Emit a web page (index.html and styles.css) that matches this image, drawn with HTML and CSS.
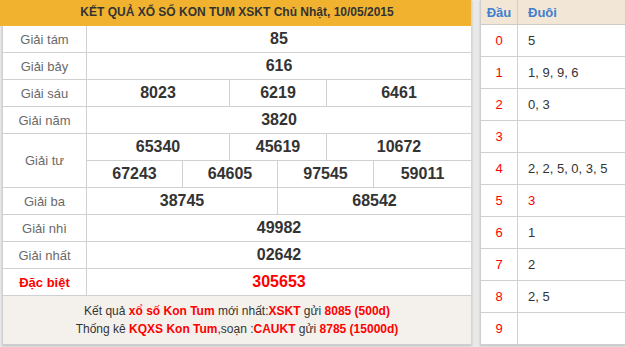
FILE: index.html
```html
<!DOCTYPE html>
<html lang="vi">
<head>
<meta charset="utf-8">
<title>KQXS Kon Tum</title>
<link rel="stylesheet" href="styles.css">
</head>
<body>
<div class="page">
  <div class="panel result">
    <div class="title">KẾT QUẢ XỔ SỐ KON TUM XSKT Chủ Nhật, 10/05/2015</div>
    <div class="grid">
      <div class="lbl">Giải tám</div>
      <div class="num span6">85</div>

      <div class="lbl">Giải bảy</div>
      <div class="num span6">616</div>

      <div class="lbl">Giải sáu</div>
      <div class="num s-a">8023</div>
      <div class="num s-b">6219</div>
      <div class="num s-c">6461</div>

      <div class="lbl">Giải năm</div>
      <div class="num span6">3820</div>

      <div class="lbl tall">Giải tư</div>
      <div class="num s-a">65340</div>
      <div class="num s-b">45619</div>
      <div class="num s-c">10672</div>
      <div class="num q-a">67243</div>
      <div class="num q-b">64605</div>
      <div class="num q-c">97545</div>
      <div class="num q-d">59011</div>

      <div class="lbl">Giải ba</div>
      <div class="num h-a">38745</div>
      <div class="num h-b">68542</div>

      <div class="lbl">Giải nhì</div>
      <div class="num span6">49982</div>

      <div class="lbl">Giải nhất</div>
      <div class="num span6">02642</div>

      <div class="lbl special">Đặc biệt</div>
      <div class="num span6 special">305653</div>
    </div>
    <div class="foot">
      <div>Kết quả <b class="red">xổ số Kon Tum</b> mới nhất:<b class="red">XSKT</b> gửi <b class="red">8085 (500d)</b></div>
      <div>Thống kê <b class="red">KQXS Kon Tum</b>,soạn :<b class="red">CAUKT</b> gửi <b class="red">8785 (15000d)</b></div>
    </div>
  </div>

  <div class="panel loto">
    <div class="lrow head"><div class="dau">Đầu</div><div class="duoi">Đuôi</div></div>
    <div class="lrow"><div class="dau">0</div><div class="duoi">5</div></div>
    <div class="lrow"><div class="dau">1</div><div class="duoi">1, 9, 9, 6</div></div>
    <div class="lrow"><div class="dau">2</div><div class="duoi">0, 3</div></div>
    <div class="lrow"><div class="dau">3</div><div class="duoi"></div></div>
    <div class="lrow"><div class="dau">4</div><div class="duoi">2, 2, 5, 0, 3, 5</div></div>
    <div class="lrow"><div class="dau">5</div><div class="duoi red">3</div></div>
    <div class="lrow"><div class="dau">6</div><div class="duoi">1</div></div>
    <div class="lrow"><div class="dau">7</div><div class="duoi">2</div></div>
    <div class="lrow"><div class="dau">8</div><div class="duoi">2, 5</div></div>
    <div class="lrow last"><div class="dau">9</div><div class="duoi"></div></div>
  </div>
</div>
</body>
</html>
```
FILE: styles.css
```css
* { box-sizing: border-box; }
html, body {
  margin: 0;
  padding: 0;
  background: #e9e9e9;
  font-family: "Liberation Sans", Arial, sans-serif;
  color: #333;
}
.page {
  display: flex;
  gap: 8px;
  padding-left: 2px;
  height: 347px;
  align-items: flex-start;
}
.panel {
  background: #fff;
  box-shadow: 0 1px 2px rgba(0,0,0,0.18);
}
.result {
  width: 470px;
  border-left: 1px solid #cfcfcf;
  border-right: 1px solid #d6d6d6;
  border-bottom: 1px solid #cfcfcf;
}
.title {
  height: 26px;
  line-height: 25px;
  margin-left: -3px;
  background: #f1b32f;
  text-align: center;
  font-weight: bold;
  font-size: 12px;
  color: #333;
  padding-left: 3px;
}
.grid {
  display: grid;
  grid-template-columns: 84px 96px 47px 48px 49px 47px 1fr;
  grid-auto-rows: 27px;
}
.grid > div {
  border-bottom: 1px solid #d0d0d0;
  display: flex;
  align-items: center;
  justify-content: center;
}
.lbl {
  grid-column: 1;
  border-right: 1px solid #d0d0d0;
  font-size: 13px;
  color: #6a6a6a;
}
.lbl.tall { grid-row: span 2; }
.num {
  font-size: 16px;
  font-weight: bold;
  color: #333;
  border-right: 1px solid #d0d0d0;
}
.span6 { grid-column: 2 / 8; border-right: none !important; }
.s-a { grid-column: 2 / 4; }
.s-b { grid-column: 4 / 6; }
.s-c { grid-column: 6 / 8; border-right: none !important; }
.q-a { grid-column: 2 / 3; }
.q-b { grid-column: 3 / 5; }
.q-c { grid-column: 5 / 7; }
.q-d { grid-column: 7 / 8; border-right: none !important; }
.h-a { grid-column: 2 / 5; }
.h-b { grid-column: 5 / 8; border-right: none !important; }
.lbl.special { color: #f00; font-weight: bold; }
.num.special { color: #f00; }
.foot {
  background: #f4f1ec;
  height: 48px;
  padding-top: 6px;
  text-align: center;
  font-size: 12px;
  line-height: 18px;
  color: #333;
}
.red { color: #f00; }
.foot b { font-weight: bold; }

.loto {
  flex: 1;
  border-left: 1px solid #cfcfcf;
  border-right: 1px solid #cfcfcf;
  border-bottom: 1px solid #cfcfcf;
  font-size: 13px;
}
.lrow {
  display: flex;
  height: 32px;
  border-bottom: 1px solid #d0d0d0;
}
.lrow.last { border-bottom: none; height: 31px; }
.lrow.head {
  height: 25px;
  background: #f2e6d7;
  border-bottom-color: #cfcac4;
}
.dau {
  width: 37px;
  border-right: 1px solid #d0d0d0;
  display: flex;
  align-items: center;
  justify-content: center;
  color: #f00;
}
.duoi {
  flex: 1;
  display: flex;
  align-items: center;
  padding-left: 10px;
  color: #333;
}
.duoi.red { color: #f00; }
.head .dau, .head .duoi {
  color: #4080d0;
  font-weight: bold;
}
```
